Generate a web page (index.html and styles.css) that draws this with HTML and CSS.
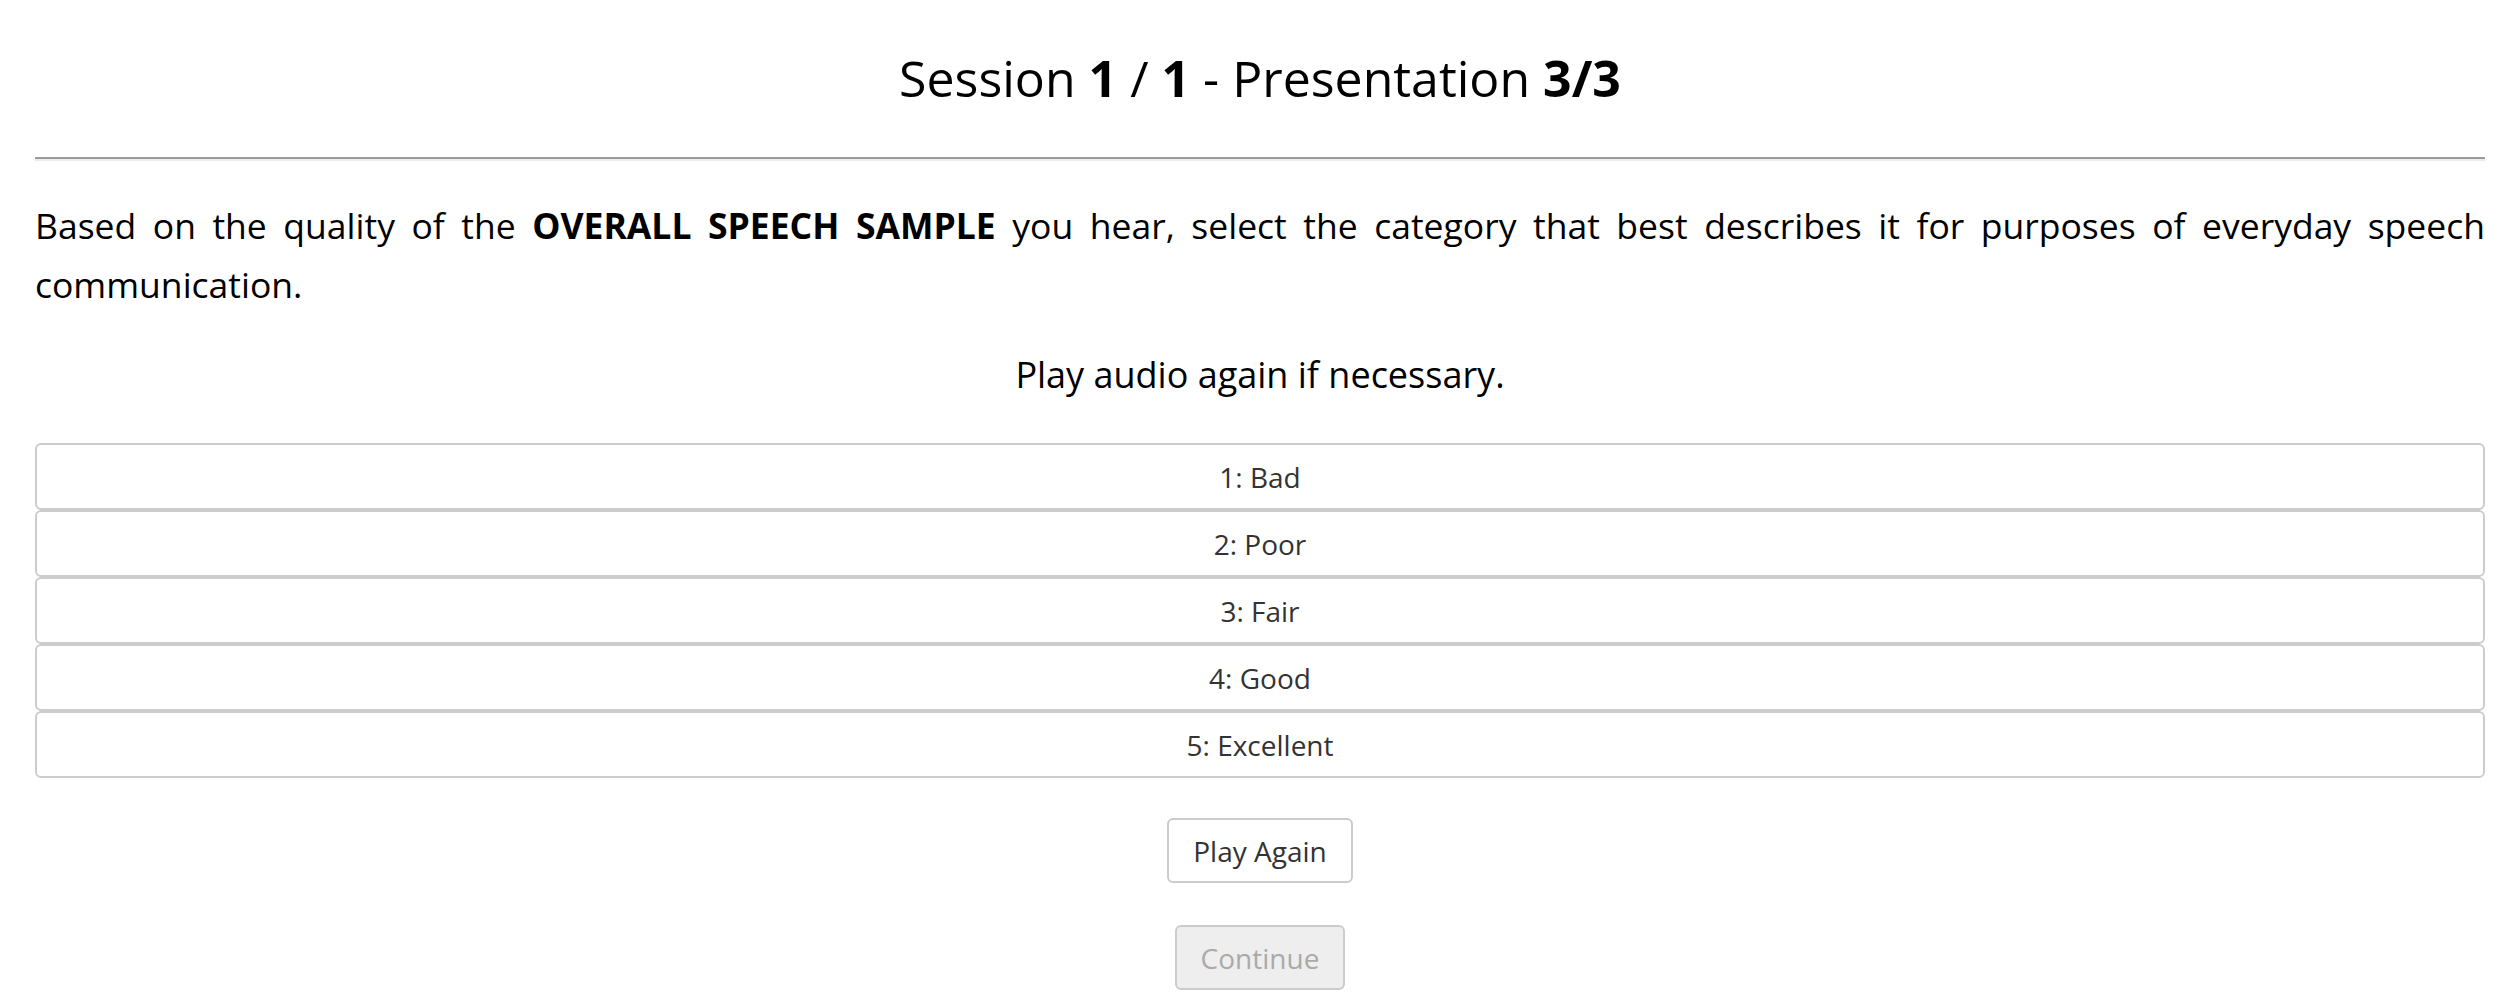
FILE: index.html
```html
<!DOCTYPE html>
<html lang="en">
<head>
<meta charset="utf-8">
<title>Session 1 / 1 - Presentation 3/3</title>
<link rel="stylesheet" href="styles.css">
</head>
<body>
<div class="page">
  <h1 class="title">Session <b>1</b> / <b>1</b> - Presentation <b>3/3</b></h1>
  <hr class="rule">
  <p class="prompt">Based on the quality of the <b>OVERALL SPEECH SAMPLE</b> you hear, select the category that best describes it for purposes of everyday speech communication.</p>
  <p class="hint">Play audio again if necessary.</p>
  <div class="options">
    <button class="option">1: Bad</button>
    <button class="option">2: Poor</button>
    <button class="option">3: Fair</button>
    <button class="option">4: Good</button>
    <button class="option">5: Excellent</button>
  </div>
  <div class="actions">
    <button class="btn">Play Again</button>
    <button class="btn btn-disabled" disabled>Continue</button>
  </div>
</div>
</body>
</html>
```

FILE: styles.css
```css
html, body {
  margin: 0;
  padding: 0;
  background: #ffffff;
}

body {
  font-family: "Open Sans", "Noto Sans", sans-serif;
  color: #000000;
}

.page {
  padding: 0 23px 0 35px;
}

.title {
  margin: 49px 0 0;
  font-size: 50px;
  line-height: 59px;
  font-weight: 400;
  text-align: center;
}

.title b {
  font-weight: 700;
}

.rule {
  margin: 49px 0 0;
  height: 0;
  border: 0;
  border-top: 2px solid #9b9b9b;
  border-bottom: 2px solid #ececec;
}

.prompt {
  margin: 35px 0 0;
  font-size: 35.5px;
  line-height: 59px;
  text-align: justify;
}

.prompt b {
  font-weight: 700;
}

.hint {
  margin: 31px 0 0;
  font-size: 36px;
  line-height: 59px;
  text-align: center;
}

.options {
  margin-top: 39px;
  display: flex;
  flex-direction: column;
}

.option {
  display: flex;
  align-items: center;
  justify-content: center;
  box-sizing: border-box;
  height: 67px;
  width: 100%;
  margin: 0;
  padding: 0;
  background: #ffffff;
  border: 2px solid #cccccc;
  border-radius: 6px;
  font-family: "Open Sans", "Noto Sans", sans-serif;
  font-size: 28px;
  color: #333333;
}

.actions {
  margin-top: 40px;
  display: flex;
  flex-direction: column;
  align-items: center;
  gap: 42px;
}

.btn {
  box-sizing: border-box;
  height: 65px;
  margin: 0;
  padding: 0 24px;
  background: #ffffff;
  border: 2px solid #cccccc;
  border-radius: 6px;
  font-family: "Open Sans", "Noto Sans", sans-serif;
  font-size: 28px;
  color: #333333;
}

.btn-disabled {
  background: #eeeeee;
  color: #aaaaaa;
}
```
